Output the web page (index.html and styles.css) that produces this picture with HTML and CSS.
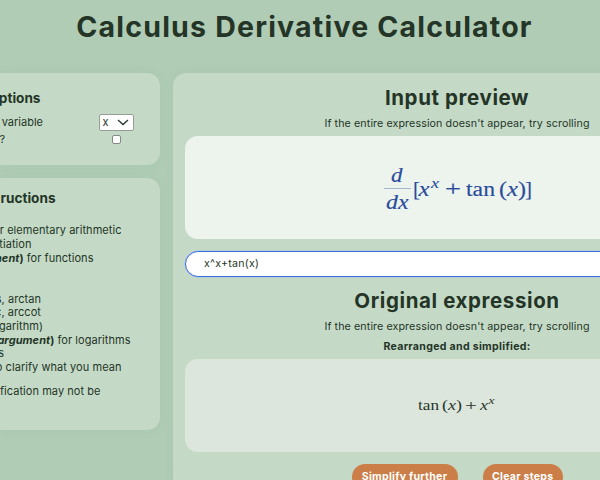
FILE: index.html
```
<!DOCTYPE html>
<html lang="en">
<head>
<meta charset="utf-8">
<title>Calculus Derivative Calculator</title>
<link rel="stylesheet" href="styles.css">
</head>
<body>
<h1>Calculus Derivative Calculator</h1>
<div class="layout">
  <aside class="sidebar">
    <section class="card options">
      <h3 class="end-40">ptions</h3>
      <div class="option"><label for="variable">variable</label>
        <div class="select" id="variable"><span>x</span><svg width="12" height="7" viewBox="0 0 12 7"><path d="M1 1 L6 5.6 L11 1" fill="none" stroke="#26352a" stroke-width="1.3"/></svg></div>
      </div>
      <div class="option"><label>?</label><span class="check"></span></div>
    </section>
    <section class="card instructions">
      <h3 class="end-55">ructions</h3>
      <div class="line end-121">r elementary arithmetic</div>
      <div class="line end-32">tiation</div>
      <div class="line end-93"><b><i>ment</i>)</b> for functions</div>
      <div class="line gap"></div>
      <div class="line gap"></div>
      <div class="line end-41">s, arctan</div>
      <div class="line end-41">c, arccot</div>
      <div class="line end-43">garithm)</div>
      <div class="line end-130"><b><i>argument</i>)</b> for logarithms</div>
      <div class="line end-4">s</div>
      <div class="line end-121">o clarify what you mean</div>
      <div class="line end-100 note">fication may not be</div>
    </section>
  </aside>
  <main class="card main">
    <h2>Input preview</h2>
    <p class="hint">If the entire expression doesn't appear, try scrolling</p>
    <div class="box preview">
      <svg class="math" width="150" height="50" viewBox="0 0 150 50" fill="#2a4c9b" stroke="#2a4c9b" stroke-width=".15">
        <g font-size="20.5">
          <text x="9" y="17.5" class="it" textLength="11.5" lengthAdjust="spacingAndGlyphs">d</text>
          <rect x="2" y="24" width="27" height="1" fill="#a3b8d2" stroke="none"/>
          <text x="4" y="45" class="it" textLength="22.5" lengthAdjust="spacingAndGlyphs">dx</text>
          <text x="31" y="31.5" textLength="7" lengthAdjust="spacingAndGlyphs">[</text>
          <text x="36.5" y="31.5" class="it" textLength="11" lengthAdjust="spacingAndGlyphs">x</text>
          <text x="49" y="23.5" class="it" font-size="14.5" textLength="8" lengthAdjust="spacingAndGlyphs">x</text>
          <text x="63" y="31.5" textLength="16" lengthAdjust="spacingAndGlyphs">+</text>
          <text x="84" y="31.5" textLength="29" lengthAdjust="spacingAndGlyphs">tan</text>
          <text x="117" y="31.5" textLength="8" lengthAdjust="spacingAndGlyphs">(</text>
          <text x="125" y="31.5" class="it" textLength="11" lengthAdjust="spacingAndGlyphs">x</text>
          <text x="136" y="31.5" textLength="8" lengthAdjust="spacingAndGlyphs">)</text>
          <text x="143" y="31.5" textLength="7" lengthAdjust="spacingAndGlyphs">]</text>
        </g>
      </svg>
    </div>
    <div class="field">x^x+tan(x)</div>
    <h2>Original expression</h2>
    <p class="hint">If the entire expression doesn't appear, try scrolling</p>
    <p class="result-label">Rearranged and simplified:</p>
    <div class="box result">
      <svg class="math" width="80" height="24" viewBox="0 0 80 24" fill="#26352a">
        <g font-size="14.5">
          <text x="1" y="16.5" textLength="21" lengthAdjust="spacingAndGlyphs">tan</text>
          <text x="25" y="16.5" textLength="6" lengthAdjust="spacingAndGlyphs">(</text>
          <text x="31" y="16.5" class="it" textLength="8" lengthAdjust="spacingAndGlyphs">x</text>
          <text x="39" y="16.5" textLength="6" lengthAdjust="spacingAndGlyphs">)</text>
          <text x="48" y="16.5" textLength="12" lengthAdjust="spacingAndGlyphs">+</text>
          <text x="63" y="16.5" class="it" textLength="8" lengthAdjust="spacingAndGlyphs">x</text>
          <text x="71.5" y="11" class="it" font-size="10.5" textLength="6" lengthAdjust="spacingAndGlyphs">x</text>
        </g>
      </svg>
    </div>
    <div class="actions">
      <div class="button simplify">Simplify further</div>
      <div class="button clear">Clear steps</div>
    </div>
  </main>
</div>
</body>
</html>
```
FILE: styles.css
```
* { box-sizing: border-box; }
html, body { height: 480px; overflow: hidden; }
body {
  margin: 0;
  background: #b0ccb5;
  color: #243528;
  font: 11px/13.65px Inter, "Liberation Sans", sans-serif;
}
h1, h2, h3, p { margin: 0; }
h1 {
  height: 72.5px;
  padding-top: 9px;
  width: 609px;
  font-size: 28.5px;
  line-height: 36px;
  letter-spacing: 1.2px;
  text-align: center;
  white-space: nowrap;
}
.layout { display: flex; gap: 12.5px; align-items: flex-start; height: 407.5px; width: 600px; overflow: visible; }
.sidebar { flex: none; width: 160px; display: flex; flex-direction: column; gap: 12.5px; }
.card { background: #c5dac6; box-shadow: 0 0 12px rgba(70, 120, 80, .06); }
.sidebar .card { border-radius: 0 13px 13px 0; }
.options { height: 92.8px; padding-top: 15.5px; }
.instructions { height: 252.5px; padding-top: 10.2px; }
h3 { font-size: 13.6px; line-height: 20px; white-space: nowrap; }
.options h3 { margin-bottom: 6px; }
.instructions h3 { margin-bottom: 16.4px; }
.option { display: flex; align-items: center; height: 17.2px; }
.option label { width: 43px; padding-top: 1px; display: flex; justify-content: flex-end; white-space: pre; }
.option:last-child label { width: 5px; }
.select {
  width: 35px; height: 17px; margin-left: 55.5px; padding: 0 4px 0 3px;
  display: flex; align-items: center; justify-content: space-between;
  background: #fff; border: 1px solid #979c97; border-radius: 2px;
}
.check { width: 9px; height: 9px; margin-left: 107px; background: #fff; border: 1px solid #858a85; border-radius: 2px; }
.line, h3 { display: flex; justify-content: flex-end; }
.line { height: 13.65px; white-space: pre; letter-spacing: .05px; }
.note { margin-top: 11px; }
.end-4 { width: 4px; }
.end-32 { width: 31.5px; }
.end-40 { width: 40.5px; }
.end-41 { width: 41px; }
.end-43 { width: 43px; }
.end-55 { width: 55.5px; }
.end-93 { width: 93.5px; }
.end-100 { width: 100.5px; }
.end-121 { width: 121.5px; }
.end-130 { width: 130.5px; }
.main { flex: none; width: 569px; height: 407.5px; padding: 12px 12.5px 0; border-radius: 13px 13px 0 0; text-align: center; }
h2 { font-size: 20.5px; line-height: 26px; letter-spacing: .6px; }
.hint { margin-top: 6px; font-size: 10.7px; line-height: 14px; letter-spacing: .1px; }
.box { display: flex; justify-content: center; border-radius: 13px; }
.preview { height: 102.5px; margin-top: 5.5px; padding-top: 27.5px; background: #edf4ee; }
.math { font-family: "Liberation Serif", serif; display: block; }
.it { font-style: italic; }
.field {
  height: 26px; margin: 12px 0 11.2px; padding-left: 18px;
  background: #fff; border: 1px solid #3d6ddb; border-radius: 13px;
  box-shadow: 0 0 0 .5px #a9c3e8;
  font-size: 10.6px; line-height: 24px; letter-spacing: .25px; text-align: left;
}
.result-label { margin-top: 6px; font-size: 10.6px; line-height: 14px; font-weight: 700; letter-spacing: .3px; }
.result { height: 92.5px; margin-top: 5.5px; padding-top: 33.5px; background: #dce6dd; }
.actions { display: flex; justify-content: center; gap: 25.5px; margin-top: 12.5px; }
.button {
  height: 26px; border-radius: 13px; background: #cb7e47; color: #fff;
  font-size: 10.6px; line-height: 26px; font-weight: 700; letter-spacing: .25px; white-space: nowrap;
}
.simplify { width: 106px; }
.clear { width: 79.5px; }
```
